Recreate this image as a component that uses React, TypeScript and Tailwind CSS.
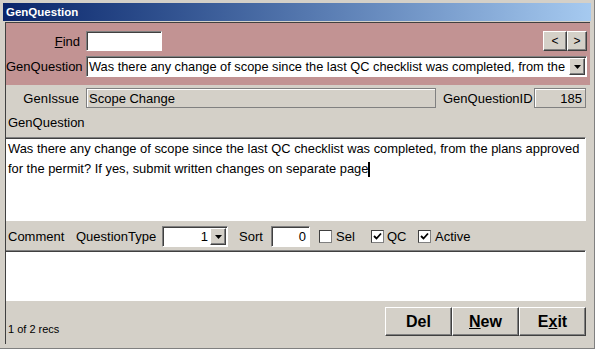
import React from "react";

const sunken =
  "border border-t-[#808080] border-l-[#808080] border-b-white border-r-white shadow-[inset_1px_1px_0_#404040]";
const raised =
  "border border-t-white border-l-white border-b-[#404040] border-r-[#404040] shadow-[inset_-1px_-1px_0_#808080] bg-[#d4d0c8]";

const DropBtn = () => (
  <div className={`${raised} w-[16px] h-[17px] flex items-center justify-center shrink-0`}>
    <svg width="7" height="4" viewBox="0 0 7 4">
      <path d="M0 0h7L3.5 4z" fill="#000" />
    </svg>
  </div>
);

const Check = ({ checked }: { checked: boolean }) => (
  <div className="w-[13px] h-[13px] bg-white border border-t-[#404040] border-l-[#404040] border-b-[#808080] border-r-[#808080] flex items-center justify-center shrink-0">
    {checked && (
      <svg width="9" height="9" viewBox="0 0 9 9">
        <path d="M1 4l2.5 2.5L8 1.5" stroke="#000" strokeWidth="1.8" fill="none" />
      </svg>
    )}
  </div>
);

export default function App() {
  return (
    <div className="w-[595px] h-[349px] bg-[#d4d0c8] p-[3px] border-r border-b border-[#808080] text-[13px] text-black leading-[15px] font-['Liberation_Sans',Arial,sans-serif] overflow-hidden">
      {/* title bar */}
      <div className="h-[18px] w-[588px] bg-linear-to-r from-[#0a246a] to-[#a6caf0] flex items-center pl-[3px]">
        <span className="text-white font-bold text-[11.5px]">GenQuestion</span>
      </div>

      <div className="mt-[1px] ml-[2px] w-[585px] h-[322px] border-l border-t border-[#404040] flex flex-col">
        {/* header */}
        <div className="h-[62px] bg-[#c29393] flex flex-col">
          <div className="flex items-center mt-[8px] h-[20px]">
            <span className="w-[74px] text-right">
              <span className="underline">F</span>ind
            </span>
            <div className={`${sunken} ml-[6px] w-[76px] h-[20px] bg-white`} />
            <div className="ml-auto mr-[3px] flex">
              <div className={`${raised} w-[24px] h-[20px] flex items-center justify-center text-[12px] leading-none pb-[1px]`}>&lt;</div>
              <div className={`${raised} w-[20px] h-[20px] flex items-center justify-center text-[12px] leading-none pb-[1px]`}>&gt;</div>
            </div>
          </div>
          <div className="flex items-center mt-[5px] h-[21px]">
            <span className="w-[75px] text-right">GenQuestion</span>
            <div className={`${sunken} ml-[5px] mr-[3px] flex-1 h-[21px] bg-white flex items-center pl-[2px] pr-[1px]`}>
              <span className="flex-1 whitespace-nowrap text-[12.8px]">
                Was there any change of scope since the last QC checklist was completed, from the
              </span>
              <DropBtn />
            </div>
          </div>
        </div>

        {/* GenIssue row */}
        <div className="flex items-center mt-[3px] h-[20px]">
          <span className="w-[73px] text-right">GenIssue</span>
          <div className="ml-[7px] w-[350px] h-[20px] border border-[#808080] shadow-[inset_1px_1px_0_white] flex items-center pl-[2px]">
            Scope Change
          </div>
          <span className="ml-[7px] w-[90px]">GenQuestionID</span>
          <div className="ml-[1px] w-[52px] h-[20px] border border-[#808080] shadow-[inset_1px_1px_0_white] flex items-center justify-end pr-[3px]">
            185
          </div>
        </div>

        <div className="h-[29px] pl-[2px] pt-[7px]">GenQuestion</div>

        {/* memo */}
        <div className="w-[580px] h-[84px] bg-white border-t border-t-[#808080] border-r border-r-white border-b border-b-white shadow-[inset_0_1px_0_#404040] pl-[2px] pt-[1px] leading-[20px] text-[12.9px]">
          Was there any change of scope since the last QC checklist was completed, from the plans approved
          <br />
          for the permit? If yes, submit written changes on separate page
          <span className="inline-block w-[2px] h-[15px] bg-black align-middle" />
        </div>

        {/* controls row */}
        <div className="flex items-center mt-[5px] h-[21px] pl-[2px]">
          <span className="w-[68px]">Comment</span>
          <span className="w-[86px]">QuestionType</span>
          <div className={`${sunken} w-[66px] h-[21px] bg-white flex items-center justify-end pr-[1px]`}>
            <span className="mr-[2px]">1</span>
            <DropBtn />
          </div>
          <span className="ml-[11px] w-[32px]">Sort</span>
          <div className={`${sunken} w-[39px] h-[21px] bg-white flex items-center justify-end pr-[3px]`}>0</div>
          <div className="ml-[9px] flex items-center w-[52px]">
            <Check checked={false} />
            <span className="ml-[4px]">Sel</span>
          </div>
          <div className="flex items-center w-[47px]">
            <Check checked />
            <span className="ml-[3px]">QC</span>
          </div>
          <div className="flex items-center">
            <Check checked />
            <span className="ml-[4px]">Active</span>
          </div>
        </div>

        {/* comment box */}
        <div className="mt-[3px] w-[580px] h-[51px] bg-white border-t border-t-[#808080] border-r border-r-white border-b border-b-white shadow-[inset_0_1px_0_#404040]" />

        {/* footer */}
        <div className="flex items-end mt-[6px] w-[580px] h-[29px]">
          <span className="pl-[2px] text-[11px] leading-[12px] mb-[1px]">1 of 2 recs</span>
          <div className="ml-auto flex">
            {[
              ["Del", -1],
              ["New", 0],
              ["Exit", 1],
            ].map(([label, u]) => (
              <div
                key={label as string}
                className={`${raised} w-[67px] h-[29px] flex items-center justify-center font-bold text-[16px]`}
              >
                {(label as string).split("").map((ch, i) => (
                  <span key={i} className={i === u ? "underline" : ""}>
                    {ch}
                  </span>
                ))}
              </div>
            ))}
          </div>
        </div>
      </div>
    </div>
  );
}
